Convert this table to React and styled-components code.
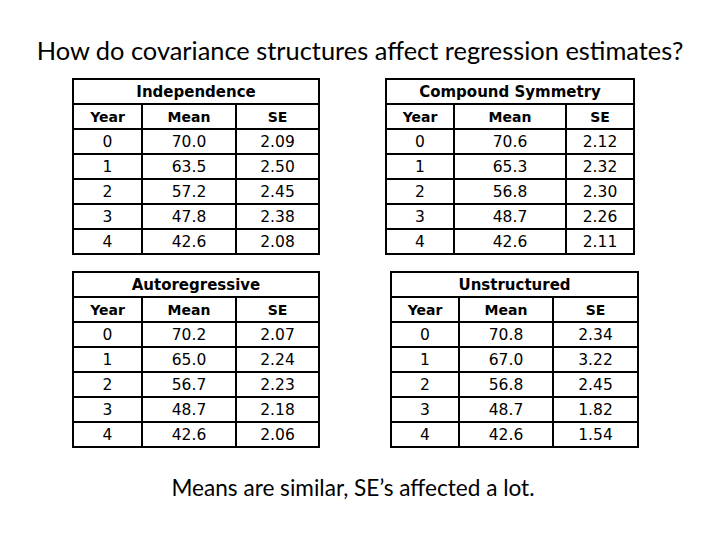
import React from "react";
import styled, { createGlobalStyle } from "styled-components";

const GlobalStyle = createGlobalStyle`
  html, body {
    margin: 0;
    padding: 0;
    background: #ffffff;
  }
`;

const Page = styled.div`
  width: 720px;
  height: 540px;
  display: flex;
  flex-direction: column;
  align-items: center;
  color: #000;
  font-family: "DejaVu Sans", sans-serif;
`;

const Heading = styled.h1`
  margin: 34px 0 0;
  font-family: "Lato", "Open Sans", sans-serif;
  font-weight: 400;
  font-size: 25.4px;
  line-height: 32px;
  white-space: nowrap;
`;

const Grid = styled.div`
  align-self: flex-start;
  margin: 12px 0 0 72px;
  display: grid;
  grid-template-columns: 246px 252px;
  column-gap: 67px;
  row-gap: 16px;
`;

const Table = styled.table`
  width: ${(p) => p.$width}px;
  margin-left: ${(p) => p.$inset || 0}px;
  table-layout: fixed;
  border-collapse: collapse;
  border: 2px solid #000;
`;

const Row = styled.tr`
  height: 25px;
`;

const TitleCell = styled.th`
  border: 2px solid #000;
  padding: 0;
  font-size: 15px;
  font-weight: 700;
  text-align: center;
`;

const HeadCell = styled.th`
  border: 2px solid #000;
  padding: 0;
  font-size: 14px;
  font-weight: 700;
  text-align: center;
`;

const Cell = styled.td`
  border: 2px solid #000;
  padding: 0;
  font-size: 15.5px;
  text-align: center;
`;

const Caption = styled.p`
  margin: 26px 14px 0 0;
  font-family: "Lato", "Open Sans", sans-serif;
  font-size: 22.6px;
  line-height: 28px;
  white-space: nowrap;
`;

const tables = [
  {
    title: "Independence",
    cols: [69, 94, 83],
    rows: [
      ["0", "70.0", "2.09"],
      ["1", "63.5", "2.50"],
      ["2", "57.2", "2.45"],
      ["3", "47.8", "2.38"],
      ["4", "42.6", "2.08"],
    ],
  },
  {
    title: "Compound Symmetry",
    cols: [68, 112, 68],
    rows: [
      ["0", "70.6", "2.12"],
      ["1", "65.3", "2.32"],
      ["2", "56.8", "2.30"],
      ["3", "48.7", "2.26"],
      ["4", "42.6", "2.11"],
    ],
  },
  {
    title: "Autoregressive",
    cols: [69, 94, 83],
    rows: [
      ["0", "70.2", "2.07"],
      ["1", "65.0", "2.24"],
      ["2", "56.7", "2.23"],
      ["3", "48.7", "2.18"],
      ["4", "42.6", "2.06"],
    ],
  },
  {
    title: "Unstructured",
    cols: [68, 94, 85],
    inset: 5,
    rows: [
      ["0", "70.8", "2.34"],
      ["1", "67.0", "3.22"],
      ["2", "56.8", "2.45"],
      ["3", "48.7", "1.82"],
      ["4", "42.6", "1.54"],
    ],
  },
];

function EstimateTable({ title, cols, inset, rows }) {
  const width = cols.reduce((a, b) => a + b, 0);
  return (
    <Table $width={width} $inset={inset}>
      <colgroup>
        {cols.map((w, i) => (
          <col key={i} style={{ width: w }} />
        ))}
      </colgroup>
      <thead>
        <Row>
          <TitleCell colSpan={3}>{title}</TitleCell>
        </Row>
        <Row>
          <HeadCell>Year</HeadCell>
          <HeadCell>Mean</HeadCell>
          <HeadCell>SE</HeadCell>
        </Row>
      </thead>
      <tbody>
        {rows.map((r) => (
          <Row key={r[0]}>
            {r.map((v, i) => (
              <Cell key={i}>{v}</Cell>
            ))}
          </Row>
        ))}
      </tbody>
    </Table>
  );
}

export default function App() {
  return (
    <Page>
      <GlobalStyle />
      <Heading>How do covariance structures affect regression estimates?</Heading>
      <Grid>
        {tables.map((t) => (
          <EstimateTable key={t.title} {...t} />
        ))}
      </Grid>
      <Caption>Means are similar, SE’s affected a lot.</Caption>
    </Page>
  );
}
